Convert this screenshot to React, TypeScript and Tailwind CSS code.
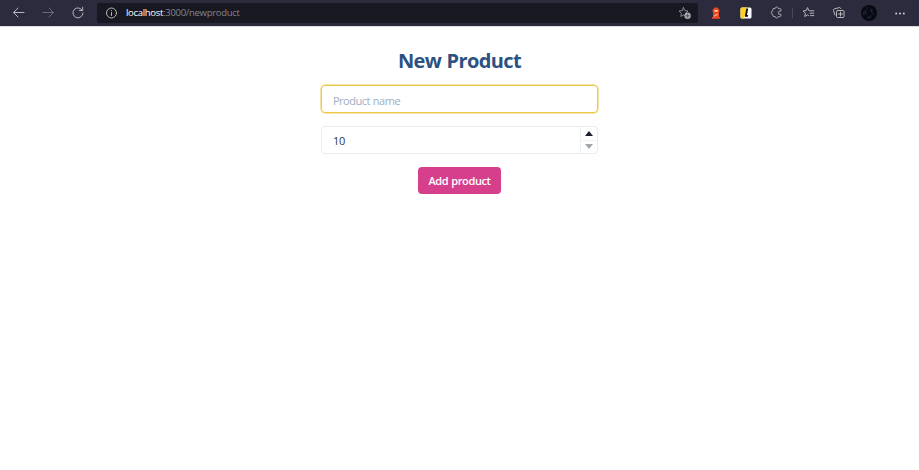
import type { ReactNode } from "react";

function Icon({ children, size = 14, className = "" }: { children: ReactNode; size?: number; className?: string }) {
  return (
    <svg width={size} height={size} viewBox="0 0 14 14" fill="none" stroke="currentColor" strokeWidth="1" strokeLinecap="round" strokeLinejoin="round" className={`shrink-0 ${className}`}>
      {children}
    </svg>
  );
}

const STAR = "M5.5 1.6 6.8 4.6 10 5 7.6 7.3 8.2 10.5 5.5 8.9 2.8 10.5 3.4 7.3 1 5 4.2 4.6Z";

function BrowserBar() {
  return (
    <header className="flex h-[26px] items-center bg-[#2b2b3d] text-[#b6b6bc] shadow-[0_1px_0_#dcdcdf]">
      <Icon className="ml-3">
        <path d="M12 6.5H1.5M6 2 1.5 6.5 6 11" />
      </Icon>
      <Icon className="ml-4 text-[#6b6b78]">
        <path d="M1 6.5h10.5M7 2l4.500 4.500L7 11" />
      </Icon>
      <Icon className="ml-[15px]">
        <path d="M11.300 4.300A5 5 0 1 0 12 7M11.700 1.300v3.200H8.500" />
      </Icon>
      <div className="ml-[12px] flex h-5 w-[601px] items-center rounded-[2px] bg-[#181822]">
        <Icon className="ml-2">
          <circle cx="6.500" cy="7" r="5" />
          <path d="M6.500 6.500v3M6.500 4.400v.1" />
        </Icon>
        <span className="ml-[7px] text-[9.500px] leading-none tracking-[-0.3px] whitespace-nowrap text-[#85858e]">
          <span className="text-white">localhost</span>:3000/newproduct
        </span>
        <Icon className="mr-[6px] ml-auto text-[#85858c]">
          <path d={STAR} />
          <circle cx="9.600" cy="9.800" r="3.200" fill="#a8a8ad" stroke="none" />
          <path d="M8 9.800h3.200M9.600 8.200v3.200" stroke="#3a3a44" strokeWidth=".7" />
        </Icon>
      </div>
      <svg width="10" height="12" viewBox="0 0 10 12" className="ml-[13px] shrink-0">
        <path d="M3.500.500h3L8.500 3v2H8v5h1v1.700H1V10h1V5h-.5V3Z" fill="#e94725" />
        <path d="M3.500 3h3v1.800h-3Z" fill="#ffd8b4" />
        <path d="M3 8.500 7 6.500v1.300L3 9.800Z" fill="#ffb09c" />
      </svg>
      <svg width="12" height="12" viewBox="0 0 12 12" className="ml-[19px] shrink-0">
        <rect x=".5" y=".5" width="11" height="11" rx="1.500" fill="#fff" />
        <path d="M2 .5h5L4 11.500H2A1.500 1.500 0 0 1 .5 10V2A1.500 1.500 0 0 1 2 .5Z" fill="#ffd01f" />
        <path d="M6.300 1.500h1.900L7 8h1.200l-.3 1.800H5.500q-.8 0-.6-1Z" fill="#111" />
      </svg>
      <Icon className="ml-[18px] text-[#a5a5ad]">
        <path d="M4 2.500h1.200a1.500 1.500 0 0 1 3 0h1.500q1.300 0 1.300 1.300V5H10a1.700 1.700 0 0 0 0 3.400h1v.8q0 1.300-1.300 1.300H8.200a1.500 1.500 0 0 1-3 0H4q-1.300 0-1.300-1.300V8.200a1.500 1.500 0 0 1 0-3V3.800Q2.700 2.500 4 2.500Z" />
      </Icon>
      <div className="ml-[8px] h-[10px] w-px bg-[#484856]" />
      <Icon className="ml-[9px]">
        <path d="M8.300 4.800 6.900 4.600 5.500 1.600 4.200 4.600 1 5l2.400 2.300-.6 3.200 2.700-1.600 1 .6M8.800 4.800h3M8 7.200h3.800M8.500 9.600h3.300" />
      </Icon>
      <Icon className="ml-4">
        <path d="M3 9 1.500 4.500Q1.200 3.300 2.300 2.900l5-1.300Q8.400 1.400 8.800 2.500M5.500 4.500h5.500q1 0 1 1v5q0 1-1 1H5.500q-1 0-1-1v-5q0-1 1-1M8.500 6v4M6.500 8h4" />
      </Icon>
      <svg width="16" height="16" viewBox="0 0 16 16" className="ml-[15px] shrink-0">
        <circle cx="8" cy="8" r="8" fill="#080a12" />
        <path d="m4 4 2 2-1 4-2-2Zm6-1 2 2-1 3-2-3ZM6 10l2 2 3-3-1 4-3 1Z" fill="#172039" />
        <path d="M5 2 7 4M2 7l1 3M10 6l3 4" stroke="#30384b" strokeWidth=".6" />
      </svg>
      <svg width="10" height="3" viewBox="0 0 10 3" fill="#d0d0d5" className="ml-[18px] shrink-0">
        <circle cx="1.200" cy="1.500" r="1" />
        <circle cx="5" cy="1.500" r="1" />
        <circle cx="8.800" cy="1.500" r="1" />
      </svg>
    </header>
  );
}

export default function App() {
  return (
    <div className="min-h-screen bg-white font-['Open_Sans','Noto_Sans',sans-serif]">
      <BrowserBar />
      <main className="mx-auto flex w-[277px] flex-col items-center pt-[21px]">
        <h1 className="text-[20px] leading-[27px] font-bold tracking-[-0.6px] [word-spacing:0.6px] whitespace-nowrap text-[#2c5282]">New Product</h1>
        <input
          aria-label="Product name"
          placeholder="Product name"
          className="mt-[11px] h-7 w-full rounded-[4px] border border-[#ecc94b] px-[11px] pt-[2px] text-[11px] tracking-[-0.5px] [word-spacing:0.6px] text-[#2d3748] shadow-[0_0_0_0.5px_#ecc94b] outline-none placeholder:text-[#a0aec0]"
        />
        <div className="mt-[13px] flex h-7 w-full overflow-hidden rounded-[4px] border border-[#e8edf3]">
          <input aria-label="Quantity" defaultValue="10" className="min-w-0 flex-1 px-[11px] pt-[2px] text-[11px] tracking-[-0.3px] text-[#2d3748] outline-none" />
          <div className="flex w-[17px] flex-col border-l border-[#edf2f7]">
            <button aria-label="Increase" className="flex flex-1 items-center justify-center">
              <svg width="8" height="5" viewBox="0 0 8 5"><path d="M4 0 8 5H0Z" fill="#1a202c" /></svg>
            </button>
            <button aria-label="Decrease" className="flex flex-1 items-center justify-center border-t border-[#edf2f7]">
              <svg width="8" height="5" viewBox="0 0 8 5"><path d="M4 5 0 0h8Z" fill="#a3a6ab" /></svg>
            </button>
          </div>
        </div>
        <button className="mt-[13px] h-[27px] w-[83px] rounded-[4px] bg-[#d53f8c] pt-px text-[11px] font-semibold tracking-[-0.4px] [word-spacing:0.6px] whitespace-nowrap text-white">Add product</button>
      </main>
    </div>
  );
}
